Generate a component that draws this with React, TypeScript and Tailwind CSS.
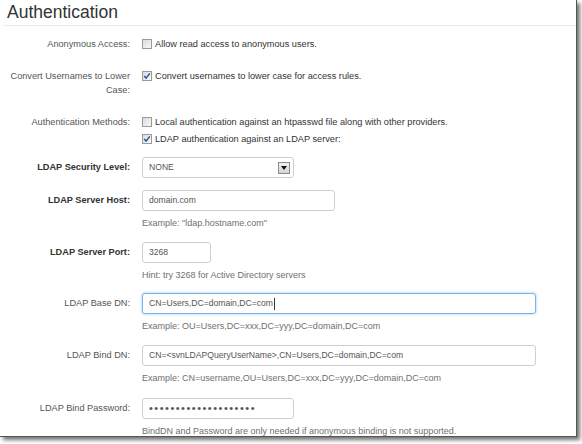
import React from "react";

function Check({ checked }: { checked?: boolean }) {
  return (
    <span className="inline-flex w-[10px] h-[10px] shrink-0 items-center justify-center border border-[#9a9a9a] bg-gradient-to-br from-[#dcdcdc] to-[#f8f8f8]">
      {checked && (
        <svg width="8" height="8" viewBox="0 0 8 8">
          <path d="M1.2 4.1 L3.1 6.1 L6.8 1.4" fill="none" stroke="#2b4fa0" strokeWidth="1.5" />
        </svg>
      )}
    </span>
  );
}

function Row({ label, children, className = "" }: { label: string; children: React.ReactNode; className?: string }) {
  return (
    <div className={`grid grid-cols-[130px_1fr] gap-x-[12px] ${className}`}>
      <div className="text-right leading-[14px] text-[#555]">{label}</div>
      <div>{children}</div>
    </div>
  );
}

function Field({ value, width, focused, dots }: { value: string; width: string; focused?: boolean; dots?: boolean }) {
  return (
    <div
      className={`${width} h-[21px] flex items-center px-[6px] rounded-[3px] bg-white text-[#555] border ${
        focused ? "border-[#7fb3e6] shadow-[0_0_3px_rgba(102,175,233,0.7)]" : "border-[#cfcfcf]"
      } ${dots ? "text-[11px] tracking-[1.5px] text-[#333]" : "text-[8.6px]"}`}
    >
      {value}
      {focused && <span className="w-px h-[12px] bg-[#333] ml-px" />}
    </div>
  );
}

function Hint({ children }: { children: React.ReactNode }) {
  return <div className="pl-[142px] text-[#6f6f6f] text-[9px] leading-[14px] mt-[5px]">{children}</div>;
}

export default function App() {
  return (
    <div className="w-[582px] h-[444px] bg-white overflow-hidden">
      <div
        className="w-[577px] h-[437px] bg-white border-r border-b border-[#555] shadow-[3px_3px_4px_rgba(0,0,0,0.55)] text-[9.2px] overflow-hidden"
        style={{ fontFamily: '"Liberation Sans", Arial, sans-serif' }}
      >
        <div className="pl-[7px] pt-[2px] text-[17.5px] leading-[21px] text-[#333]">Authentication</div>
        <div className="ml-[3px] mt-[2px] h-px bg-[#ebebeb]" />

        <Row label="Anonymous Access:" className="mt-[11px]">
          <div className="flex items-center gap-[3px] leading-[14px] text-[#333]">
            <Check />
            <span>Allow read access to anonymous users.</span>
          </div>
        </Row>

        <Row label="Convert Usernames to Lower Case:" className="mt-[18px]">
          <div className="flex items-center gap-[3px] leading-[14px] text-[#333]">
            <Check checked />
            <span>Convert usernames to lower case for access rules.</span>
          </div>
        </Row>

        <Row label="Authentication Methods:" className="mt-[18px]">
          <div className="flex flex-col gap-[3px] leading-[14px] text-[#333]">
            <div className="flex items-center gap-[3px]">
              <Check />
              <span>Local authentication against an htpasswd file along with other providers.</span>
            </div>
            <div className="flex items-center gap-[3px]">
              <Check checked />
              <span>LDAP authentication against an LDAP server:</span>
            </div>
          </div>
        </Row>

        <div className="grid grid-cols-[130px_1fr] gap-x-[12px] mt-[11px] items-center">
          <div className="text-right font-bold text-[#333]">LDAP Security Level:</div>
          <div className="w-[152px] h-[21px] flex items-center justify-between pl-[6px] pr-[3px] rounded-[3px] border border-[#cfcfcf] text-[#555] text-[8.6px]">
            <span>NONE</span>
            <span className="w-[12px] h-[12px] flex items-center justify-center border border-[#8a8a8a] bg-gradient-to-b from-[#f2f2f2] to-[#d4d4d4]">
              <svg width="6" height="4" viewBox="0 0 6 4">
                <path d="M0 0 H6 L3 4 Z" fill="#111" />
              </svg>
            </span>
          </div>
        </div>

        <div className="grid grid-cols-[130px_1fr] gap-x-[12px] mt-[12px] items-center">
          <div className="text-right font-bold text-[#333]">LDAP Server Host:</div>
          <Field value="domain.com" width="w-[193px]" />
        </div>
        <Hint>Example: "ldap.hostname.com"</Hint>

        <div className="grid grid-cols-[130px_1fr] gap-x-[12px] mt-[12px] items-center">
          <div className="text-right font-bold text-[#333]">LDAP Server Port:</div>
          <Field value="3268" width="w-[69px]" />
        </div>
        <Hint>Hint: try 3268 for Active Directory servers</Hint>

        <div className="grid grid-cols-[130px_1fr] gap-x-[12px] mt-[11px] items-center">
          <div className="text-right text-[#555]">LDAP Base DN:</div>
          <Field value="CN=Users,DC=domain,DC=com" width="w-[394px]" focused />
        </div>
        <Hint>Example: OU=Users,DC=xxx,DC=yyy,DC=domain,DC=com</Hint>

        <div className="grid grid-cols-[130px_1fr] gap-x-[12px] mt-[12px] items-center">
          <div className="text-right text-[#555]">LDAP Bind DN:</div>
          <Field value="CN=<svnLDAPQueryUserName>,CN=Users,DC=domain,DC=com" width="w-[394px]" />
        </div>
        <Hint>Example: CN=username,OU=Users,DC=xxx,DC=yyy,DC=domain,DC=com</Hint>

        <div className="grid grid-cols-[130px_1fr] gap-x-[12px] mt-[13px] items-center">
          <div className="text-right text-[#555]">LDAP Bind Password:</div>
          <Field value="••••••••••••••••••••" width="w-[152px]" dots />
        </div>
        <Hint>BindDN and Password are only needed if anonymous binding is not supported.</Hint>
      </div>
    </div>
  );
}
